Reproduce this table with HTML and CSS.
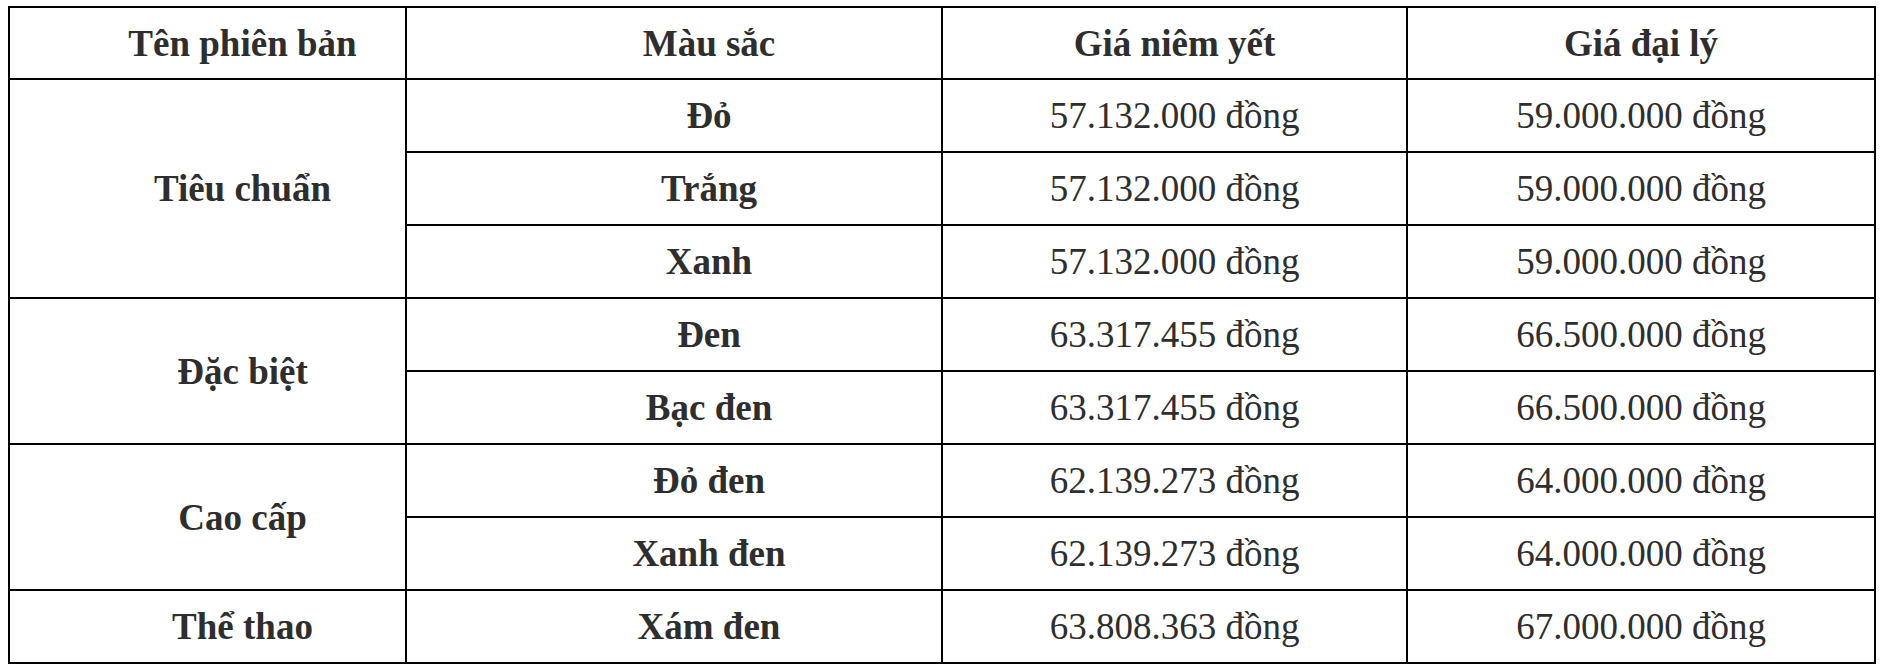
FILE: index.html
```html
<!DOCTYPE html>
<html lang="vi">
<head>
<meta charset="utf-8">
<title>Bảng giá</title>
<link rel="stylesheet" href="styles.css">
</head>
<body>
<table class="price-table">
  <colgroup>
    <col class="c1">
    <col class="c2">
    <col class="c3">
    <col class="c4">
  </colgroup>
  <thead>
    <tr class="head-row">
      <th class="shift">Tên phiên bản</th>
      <th class="shift">Màu sắc</th>
      <th>Giá niêm yết</th>
      <th>Giá đại lý</th>
    </tr>
  </thead>
  <tbody>
    <tr>
      <td class="shift bold" rowspan="3">Tiêu chuẩn</td>
      <td class="shift bold">Đỏ</td>
      <td>57.132.000 đồng</td>
      <td>59.000.000 đồng</td>
    </tr>
    <tr>
      <td class="shift bold">Trắng</td>
      <td>57.132.000 đồng</td>
      <td>59.000.000 đồng</td>
    </tr>
    <tr>
      <td class="shift bold">Xanh</td>
      <td>57.132.000 đồng</td>
      <td>59.000.000 đồng</td>
    </tr>
    <tr>
      <td class="shift bold" rowspan="2">Đặc biệt</td>
      <td class="shift bold">Đen</td>
      <td>63.317.455 đồng</td>
      <td>66.500.000 đồng</td>
    </tr>
    <tr>
      <td class="shift bold">Bạc đen</td>
      <td>63.317.455 đồng</td>
      <td>66.500.000 đồng</td>
    </tr>
    <tr>
      <td class="shift bold" rowspan="2">Cao cấp</td>
      <td class="shift bold">Đỏ đen</td>
      <td>62.139.273 đồng</td>
      <td>64.000.000 đồng</td>
    </tr>
    <tr>
      <td class="shift bold">Xanh đen</td>
      <td>62.139.273 đồng</td>
      <td>64.000.000 đồng</td>
    </tr>
    <tr>
      <td class="shift bold">Thể thao</td>
      <td class="shift bold">Xám đen</td>
      <td>63.808.363 đồng</td>
      <td>67.000.000 đồng</td>
    </tr>
  </tbody>
</table>
</body>
</html>
```

FILE: styles.css
```css
html, body {
  margin: 0;
  padding: 0;
  background: #ffffff;
}

body {
  font-family: "Liberation Serif", "Times New Roman", serif;
  color: #2e2e2e;
}

.price-table {
  margin: 6px 0 0 8px;
  width: 1866px;
  border-collapse: collapse;
  table-layout: fixed;
  font-size: 37px;
}

.c1 { width: 397px; }
.c2 { width: 536px; }
.c3 { width: 465px; }
.c4 { width: 468px; }

.price-table th,
.price-table td {
  border: 2px solid #000000;
  padding: 0;
  height: 71px;
  text-align: center;
  vertical-align: middle;
  line-height: 1;
}

.price-table th {
  font-weight: bold;
}

.price-table .head-row th {
  height: 70px;
}

.price-table .bold {
  font-weight: bold;
}

.price-table .shift {
  padding-left: 70px;
}
```
